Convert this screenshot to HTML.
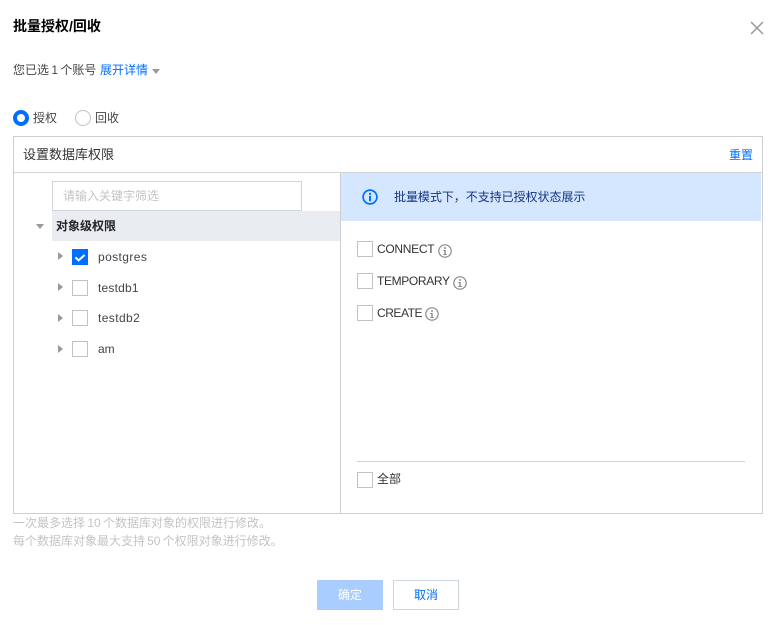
<!DOCTYPE html>
<html lang="zh"><head><meta charset="utf-8"><style>
html,body{margin:0;padding:0;background:#fff}
body{width:782px;height:625px;position:relative;overflow:hidden;font-family:"Liberation Sans","Noto Sans CJK SC",sans-serif;font-size:12px;color:#333}
.a,.t{position:absolute}
.t{white-space:nowrap;line-height:16px}
.cb{position:absolute;width:14px;height:14px;border:1px solid #c2c2c2;background:#fff}
.tri{position:absolute;width:0;height:0;border-top:4px solid transparent;border-bottom:4px solid transparent;border-left:5px solid #999}
svg{position:absolute;display:block}
</style></head><body>
<div class="t" style="left:13px;top:18px;font-size:14px;font-weight:700;color:#000">批量授权/回收</div>
<svg style="left:750px;top:21px" width="14" height="14" viewBox="0 0 14 14"><path d="M1 1L13 13M13 1L1 13" stroke="#999" stroke-width="1.5" fill="none"/></svg>

<div class="t" style="left:13px;top:62px;color:#444;word-spacing:-1px">您已选 1 个账号</div>
<div class="t" style="left:100px;top:62px;color:#006eff">展开详情</div>
<div class="a" style="left:152px;top:69px;width:0;height:0;border-left:4px solid transparent;border-right:4px solid transparent;border-top:5px solid #999"></div>

<div class="a" style="left:13px;top:110px;width:8px;height:8px;border:4px solid #006eff;border-radius:50%;background:#fff"></div>
<div class="t" style="left:33px;top:110px;color:#444">授权</div>
<div class="a" style="left:75px;top:110px;width:14px;height:14px;border:1px solid #c2c2c2;border-radius:50%"></div>
<div class="t" style="left:95px;top:110px;color:#444">回收</div>

<div class="a" style="left:13px;top:136px;width:748px;height:376px;border:1px solid #cfcfcf"></div>
<div class="a" style="left:14px;top:172px;width:748px;height:1px;background:#d4d4d4"></div>
<div class="a" style="left:340px;top:173px;width:1px;height:340px;background:#cfcfcf"></div>
<div class="t" style="left:23px;top:147px;font-size:13px;color:#333">设置数据库权限</div>
<div class="t" style="left:729px;top:147px;color:#006eff">重置</div>

<div class="a" style="left:52px;top:181px;width:248px;height:28px;border:1px solid #cfd5de"></div>
<div class="t" style="left:63px;top:188px;color:#c4c4c4">请输入关键字筛选</div>
<div class="a" style="left:52px;top:211px;width:288px;height:30px;background:#e9ecf1"></div>
<div class="a" style="left:36px;top:224px;width:0;height:0;border-left:4px solid transparent;border-right:4px solid transparent;border-top:5px solid #999"></div>
<div class="t" style="left:56px;top:218px;font-weight:700;color:#222">对象级权限</div>

<div class="tri" style="left:58px;top:252px"></div>
<div class="a" style="left:72px;top:249px;width:16px;height:16px;background:#006eff"></div>
<svg style="left:72px;top:249px" width="16" height="16" viewBox="0 0 16 16"><path d="M3.4 8.4L6.6 11.4L12.6 6" stroke="#fff" stroke-width="2" fill="none"/></svg>
<div class="t" style="left:98px;top:249px;letter-spacing:.4px;color:#444">postgres</div>

<div class="tri" style="left:58px;top:283px"></div>
<div class="cb" style="left:72px;top:280px"></div>
<div class="t" style="left:98px;top:280px;letter-spacing:.2px;color:#444">testdb1</div>

<div class="tri" style="left:58px;top:314px"></div>
<div class="cb" style="left:72px;top:310px"></div>
<div class="t" style="left:98px;top:310px;letter-spacing:.4px;color:#444">testdb2</div>

<div class="tri" style="left:58px;top:345px"></div>
<div class="cb" style="left:72px;top:341px"></div>
<div class="t" style="left:98px;top:341px;color:#444">am</div>

<div class="a" style="left:341px;top:173px;width:420px;height:48px;background:#d5e7ff"></div>
<svg style="left:362px;top:189px" width="16" height="16" viewBox="0 0 16 16"><circle cx="8" cy="8" r="6.9" fill="none" stroke="#006eff" stroke-width="1.7"/><rect x="7" y="3.8" width="2" height="2" fill="#006eff"/><rect x="7" y="6.8" width="2" height="5.4" fill="#006eff"/></svg>
<div class="t" style="left:394px;top:189px;color:#13357f;letter-spacing:-.04px">批量模式下，不支持已授权状态展示</div>

<div class="cb" style="left:357px;top:241px"></div>
<div class="t" style="left:377px;top:241px;color:#333;letter-spacing:-.3px">CONNECT</div>
<svg class="i" style="left:438px;top:244px" width="14" height="14" viewBox="0 0 14 14"><circle cx="7" cy="7" r="6.2" fill="none" stroke="#888" stroke-width="1.2"/><rect x="6.2" y="3.2" width="1.6" height="1.6" fill="#777"/><path d="M5.3 6H7.6V10H8.8V10.9H5.3V10H6.4V6.9H5.3Z" fill="#777"/></svg>

<div class="cb" style="left:357px;top:273px"></div>
<div class="t" style="left:377px;top:273px;color:#333;letter-spacing:-.35px">TEMPORARY</div>
<svg class="i" style="left:453px;top:276px" width="14" height="14" viewBox="0 0 14 14"><circle cx="7" cy="7" r="6.2" fill="none" stroke="#888" stroke-width="1.2"/><rect x="6.2" y="3.2" width="1.6" height="1.6" fill="#777"/><path d="M5.3 6H7.6V10H8.8V10.9H5.3V10H6.4V6.9H5.3Z" fill="#777"/></svg>

<div class="cb" style="left:357px;top:305px"></div>
<div class="t" style="left:377px;top:305px;color:#333;letter-spacing:-.45px">CREATE</div>
<svg class="i" style="left:425px;top:307px" width="14" height="14" viewBox="0 0 14 14"><circle cx="7" cy="7" r="6.2" fill="none" stroke="#888" stroke-width="1.2"/><rect x="6.2" y="3.2" width="1.6" height="1.6" fill="#777"/><path d="M5.3 6H7.6V10H8.8V10.9H5.3V10H6.4V6.9H5.3Z" fill="#777"/></svg>

<div class="a" style="left:357px;top:461px;width:388px;height:1px;background:#cfcfcf"></div>
<div class="cb" style="left:357px;top:472px"></div>
<div class="t" style="left:377px;top:471px;color:#333">全部</div>

<div class="t" style="left:13px;top:515px;color:#c4c4c4;word-spacing:-1px">一次最多选择 10 个数据库对象的权限进行修改。</div>
<div class="t" style="left:13px;top:533px;color:#c4c4c4;word-spacing:-1.2px">每个数据库对象最大支持 50 个权限对象进行修改。</div>

<div class="a" style="left:317px;top:580px;width:66px;height:30px;background:#a9cdff;color:#fff;text-align:center;line-height:30px">确定</div>
<div class="a" style="left:393px;top:580px;width:64px;height:28px;border:1px solid #cfd5de;color:#006eff;text-align:center;line-height:28px">取消</div>
</body></html>
